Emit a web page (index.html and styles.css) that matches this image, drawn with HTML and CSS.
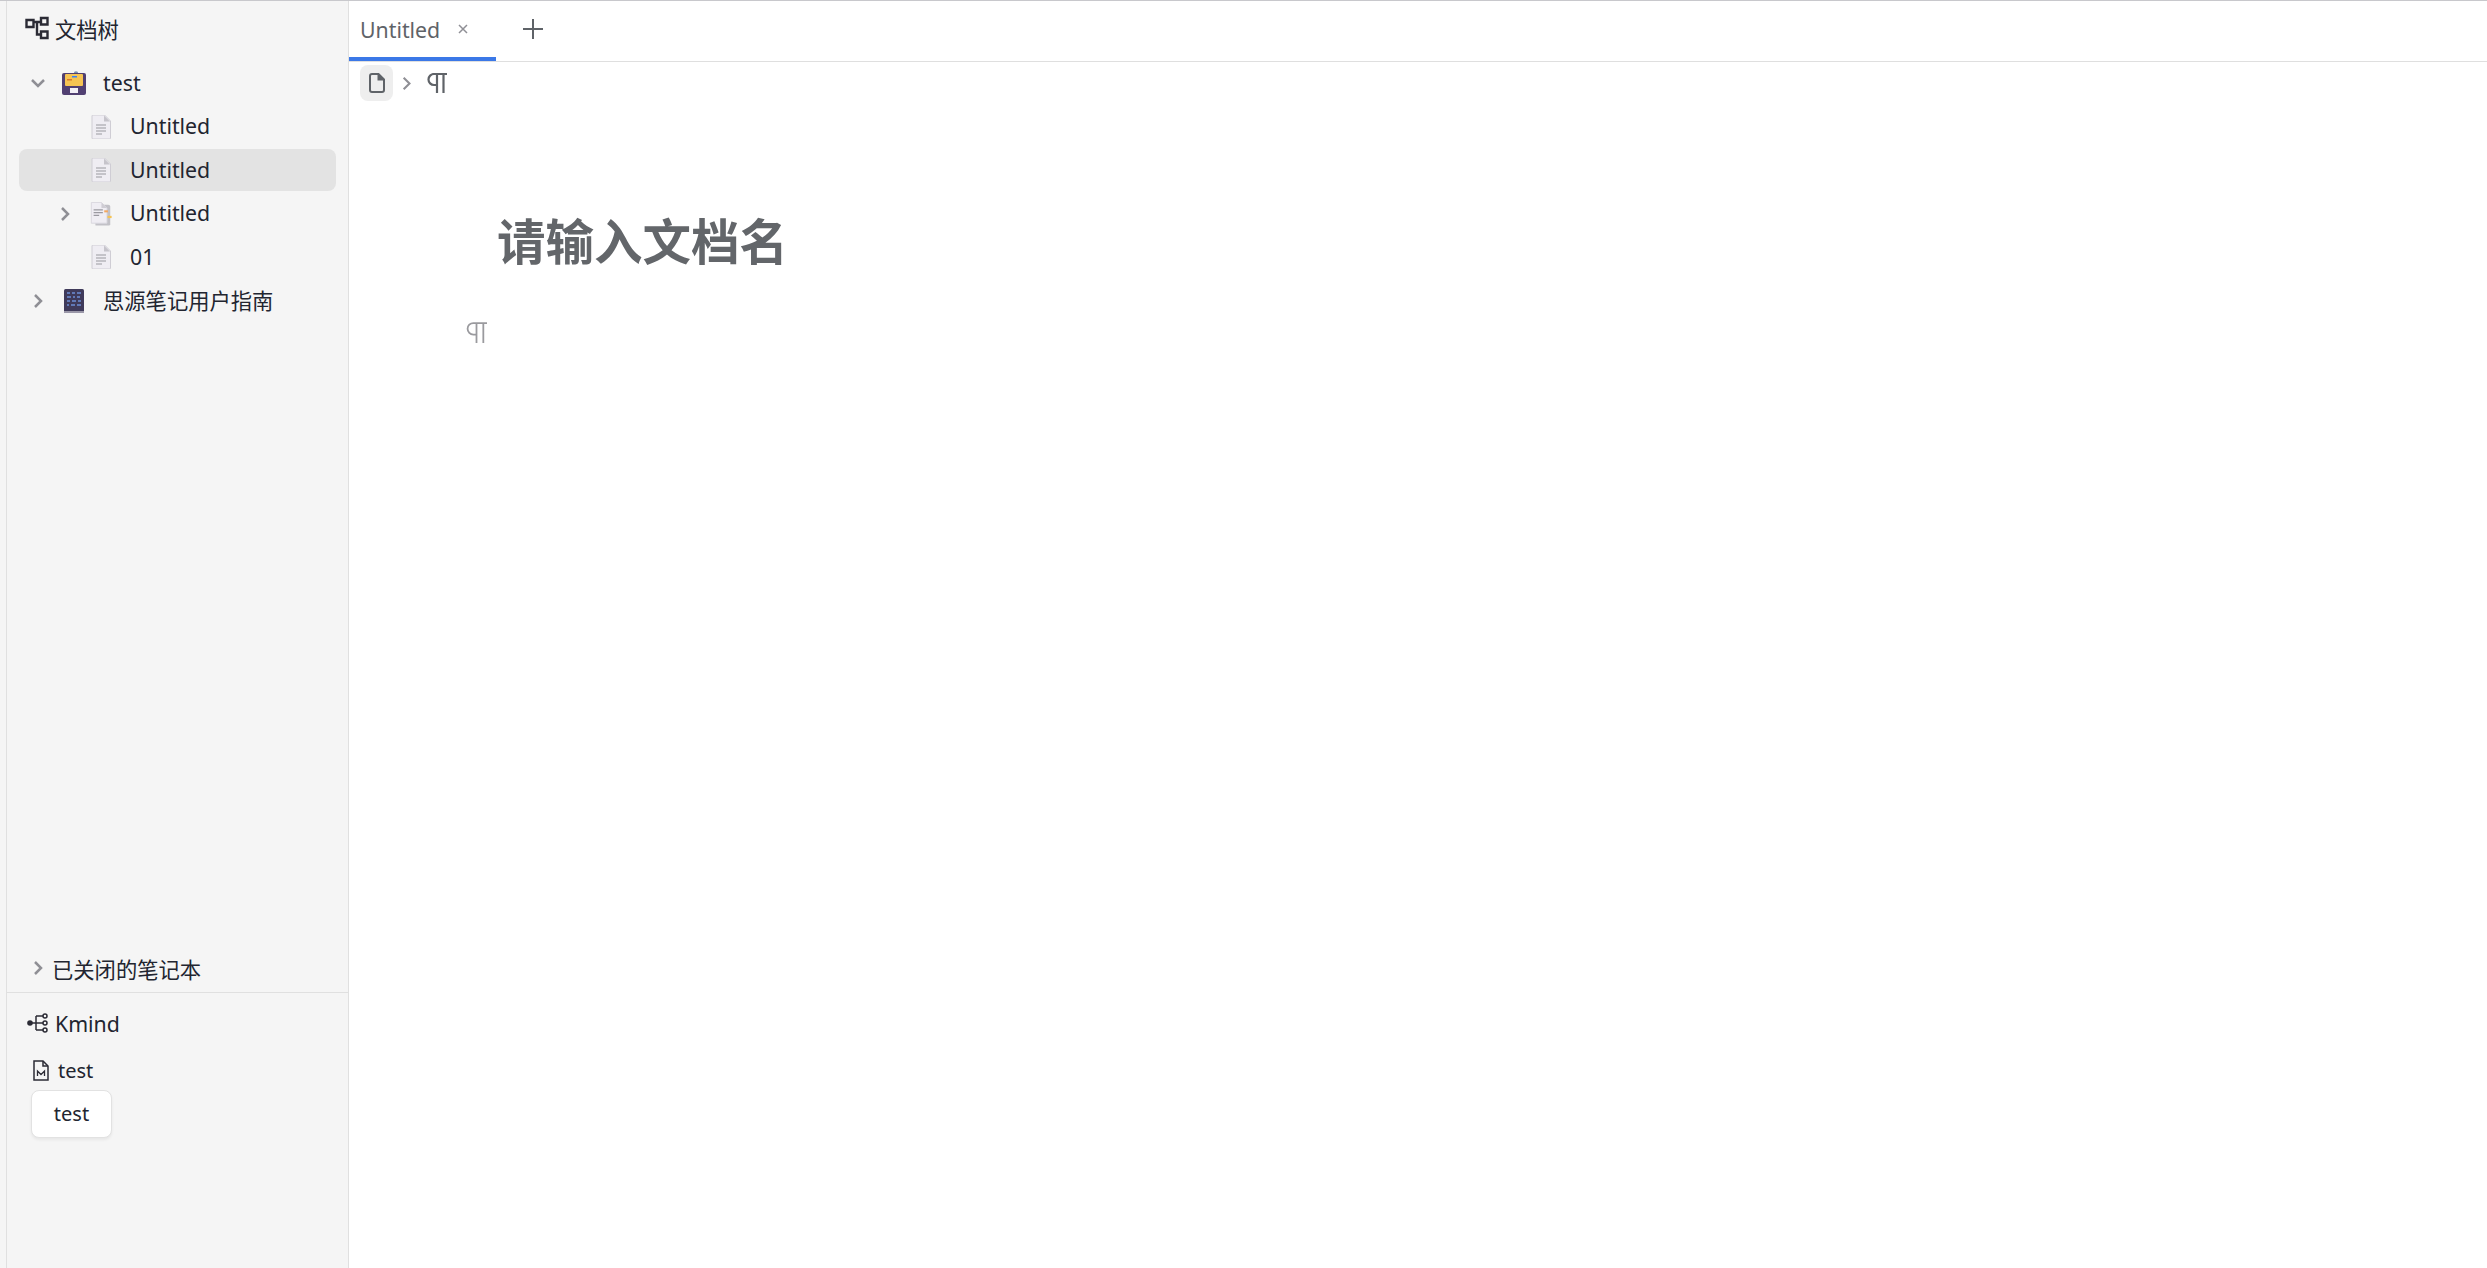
FILE: index.html
```html
<!DOCTYPE html>
<html lang="zh">
<head>
  <meta charset="UTF-8" />
  <title>Untitled</title>
  <link rel="stylesheet" href="styles.css">
</head>
<body>
  <div class="app">
    <div class="rail"></div>

    <!-- Sidebar -->
    <aside class="sidebar">
      <div class="panel-head">
        <svg class="head-icon" viewBox="0 0 24 24"><path d="M1.500 4h7v7h-7zM16 2h6.500v6.500H16zM16 15.500h6.500V22H16zM8.500 6H16M12 6v12.500h4" /></svg>
        <span>文档树</span>
      </div>

      <div class="tree">
        <div class="row level-0">
          <svg class="arrow" viewBox="0 0 16 16"><path d="M2 5l6 6 6-6" /></svg>
          <svg class="item-icon" viewBox="0 0 24 24">
            <circle cx="14" cy="2.500" r="2.200" fill="#7b8fb0" />
            <rect x="0" y="2" width="24" height="22" rx="2" fill="#514072" />
            <rect x="3" y="3" width="18" height="12" rx="1" fill="#f6c453" />
            <rect x="10" y="5" width="5" height="1.500" fill="#3b82f6" />
            <rect x="5" y="8" width="5" height="1.500" fill="#d9792b" />
            <rect x="8" y="17" width="8" height="5" fill="#f3f0f7" />
          </svg>
          <span>test</span>
        </div>
        <div class="row level-1">
          <span class="arrow"></span>
          <svg class="item-icon" viewBox="0 0 20 24"><use href="#doc-icon" /></svg>
          <span>Untitled</span>
        </div>
        <div class="row level-1 selected">
          <span class="arrow"></span>
          <svg class="item-icon" viewBox="0 0 20 24"><use href="#doc-icon" /></svg>
          <span>Untitled</span>
        </div>
        <div class="row level-1">
          <svg class="arrow" viewBox="0 0 16 16"><path d="M5 2l6 6-6 6" /></svg>
          <svg class="item-icon" viewBox="0 0 24 26">
            <path d="M5 3h15a2 2 0 0 1 2 2v19a1.500 1.500 0 0 1-1.500 1.500H6z" fill="#c2c1c7" />
            <path d="M1.500 0.500h11l6 6v16.500H1.500z" fill="#efedf3" stroke="#d8d6dd" />
            <path d="M12.500 0.500v6h6z" fill="#cfcdd4" />
            <path d="M4 8.500h10M4 11.500h10M4 14.500h6" stroke="#9a99a0" stroke-width="1.300" />
            <rect x="15.500" y="9" width="4" height="2.200" fill="#f2a65e" />
            <rect x="19" y="15" width="4.500" height="2.400" fill="#f6c453" />
          </svg>
          <span>Untitled</span>
        </div>
        <div class="row level-1">
          <span class="arrow"></span>
          <svg class="item-icon" viewBox="0 0 20 24"><use href="#doc-icon" /></svg>
          <span>01</span>
        </div>
        <div class="row level-0">
          <svg class="arrow" viewBox="0 0 16 16"><path d="M5 2l6 6-6 6" /></svg>
          <svg class="item-icon" viewBox="0 0 20 24">
            <rect x="0" y="0" width="20" height="24" rx="1.500" fill="#3f3a5a" />
            <rect x="0" y="22" width="20" height="2" fill="#9a97a8" />
            <path d="M3 4h3M8 4h3M13 4h4M3 8h4M9 8h2M13 8h3M3 12h3M8 12h4M14 12h3M3 16h2M7 16h4M13 16h4" stroke="#6d8fd6" stroke-width="1.600" />
          </svg>
          <span>思源笔记用户指南</span>
        </div>
      </div>

      <div class="closed-row">
        <svg class="arrow" viewBox="0 0 16 16"><path d="M5 2l6 6-6 6" /></svg>
        <span>已关闭的笔记本</span>
      </div>

      <div class="kmind">
        <div class="kmind-head">
          <svg class="kmind-icon" viewBox="0 0 22 20"><circle cx="3" cy="10" r="2.800" fill="#2b2b35" stroke="none" /><path d="M3 10h13M9 3v14M9 3h7M9 17h7" /><circle cx="18" cy="3" r="2" /><circle cx="18" cy="10" r="2" /><circle cx="18" cy="17" r="2" /></svg>
          <span>Kmind</span>
        </div>
        <div class="kmind-file">
          <svg class="file-icon" viewBox="0 0 16 21"><path d="M1 1h9l5 5v14H1z" /><path d="M10 1v5h5" /><path d="M4.500 16v-5l3.500 3.500 3.500-3.500v5" stroke-width="1.300" /></svg>
          <span>test</span>
        </div>
        <div class="kmind-card">test</div>
      </div>
    </aside>

    <!-- Editor -->
    <main class="editor">
      <div class="tabbar">
        <div class="tab">
          <span>Untitled</span>
          <svg class="tab-close" viewBox="0 0 10 10"><path d="M1 1l8 8M9 1l-8 8" /></svg>
        </div>
        <svg class="tab-add" viewBox="0 0 20 20"><path d="M10 0v20M0 10h20" /></svg>
      </div>

      <div class="breadcrumb">
        <span class="crumb-doc">
          <svg viewBox="0 0 16 20"><path d="M1 3a2 2 0 0 1 2-2h6.500L15 6.500V17a2 2 0 0 1-2 2H3a2 2 0 0 1-2-2z" /><path d="M9.500 1v5.500H15" fill="#5f6368" /></svg>
        </span>
        <svg class="crumb-arrow" viewBox="0 0 12 18"><path d="M2 2l7 7-7 7" /></svg>
        <svg class="crumb-mark" viewBox="0 0 20 20"><use href="#para-icon" /></svg>
      </div>

      <div class="doc-body">
        <h1 class="doc-title">请输入文档名</h1>
        <div class="block">
          <svg class="block-mark" viewBox="0 0 20 20"><use href="#para-icon" /></svg>
        </div>
      </div>
    </main>
  </div>

  <svg class="defs" width="0" height="0">
    <defs>
      <g id="doc-icon">
        <path d="M1 1a1 1 0 0 1 1-1h11.500L19.500 6v17a1 1 0 0 1-1 1H2a1 1 0 0 1-1-1z" fill="#efedf3" stroke="#cfcdd4" />
        <path d="M13 0.500v6h6z" fill="#c6c4cb" />
        <path d="M5 10h10M5 13h10M5 16h10M5 19h6" stroke="#9a99a0" stroke-width="1.200" />
      </g>
      <path id="para-icon" d="M20 1H7a5.500 5.500 0 0 0 0 11h3M10 1v19M16.500 1v19" />
    </defs>
  </svg>
</body>
</html>
```

FILE: styles.css
```css
html, body {
  margin: 0;
  height: 100%;
}

body {
  font-family: "Noto Sans", "Noto Sans CJK SC", sans-serif;
  font-size: 21.3px;
  color: #222530;
  background: #fff;
  overflow: hidden;
}

.app {
  display: flex;
  height: 100vh;
  box-sizing: border-box;
  border-top: 1px solid #c8c8cc;
}

.rail {
  width: 6px;
  background: #f5f5f5;
  border-right: 1px solid #e0e0e0;
}

/* Sidebar */
.sidebar {
  width: 342px;
  display: flex;
  flex-direction: column;
  box-sizing: border-box;
  background: #f5f5f5;
  border-right: 1px solid #e0e0e0;
}

.panel-head {
  display: flex;
  align-items: center;
  gap: 6px;
  height: 54px;
  padding-left: 18px;
}

.head-icon {
  width: 24px;
  height: 24px;
  fill: none;
  stroke: #2b2b35;
  stroke-width: 2.400;
}

.tree {
  flex: 1;
  padding: 7px 12px 0;
}

.row {
  display: flex;
  align-items: center;
  height: 42px;
  margin-bottom: 1.500px;
  border-radius: 8px;
}

.row span:last-child {
  position: relative;
  top: -1px;
}

.row.selected {
  background: #e3e3e3;
}

.level-0 {
  padding-left: 11px;
}

.level-1 {
  padding-left: 38px;
}

.arrow {
  width: 16px;
  height: 16px;
  flex: none;
  fill: none;
  stroke: #8f8f95;
  stroke-width: 2.500;
}

.item-icon {
  width: 24px;
  height: 24px;
  flex: none;
  margin: 0 17px 0 16px;
}

.closed-row {
  display: flex;
  align-items: center;
  gap: 6px;
  height: 38px;
  margin-bottom: 5px;
  padding-left: 23px;
}

.kmind {
  height: 275px;
  border-top: 1px solid #e0e0e0;
}

.kmind-head {
  display: flex;
  align-items: center;
  gap: 6px;
  height: 60px;
  padding-left: 20px;
}

.kmind-icon {
  width: 22px;
  height: 20px;
  fill: none;
  stroke: #2b2b35;
  stroke-width: 1.500;
}

.kmind-file {
  display: flex;
  align-items: center;
  gap: 9px;
  height: 34px;
  padding-left: 26px;
  font-size: 20px;
}

.file-icon {
  width: 16px;
  height: 21px;
  fill: none;
  stroke: #2b2b35;
  stroke-width: 1.500;
}

.kmind-card {
  width: 81px;
  height: 48px;
  margin: 3px 0 0 24px;
  box-sizing: border-box;
  border: 1px solid #e2e2e2;
  border-radius: 8px;
  background: #fff;
  box-shadow: 0 2px 3px rgba(0, 0, 0, 0.06);
  font-size: 20px;
  line-height: 45px;
  text-align: center;
}

/* Editor */
.editor {
  flex: 1;
  min-width: 0;
}

.tabbar {
  display: flex;
  align-items: center;
  height: 60px;
  border-bottom: 1px solid #dfdfdf;
  color: #5f6368;
}

.tab {
  display: flex;
  align-items: center;
  gap: 18px;
  width: 147px;
  height: 60px;
  box-sizing: border-box;
  padding-left: 11px;
  border-bottom: 4px solid #3b78e7;
}

.tab-close {
  width: 10px;
  height: 10px;
  fill: none;
  stroke: #8f8f95;
  stroke-width: 1.500;
}

.tab-add {
  width: 20px;
  height: 20px;
  margin: 0 0 5px 27px;
  fill: none;
  stroke: #5f6368;
  stroke-width: 2;
}

.breadcrumb {
  display: flex;
  align-items: center;
  height: 42px;
  padding-left: 11px;
}

.crumb-doc {
  display: flex;
  align-items: center;
  justify-content: center;
  width: 33px;
  height: 36px;
  border-radius: 8px;
  background: #eeeeee;
}

.crumb-doc svg {
  width: 16px;
  height: 20px;
  fill: none;
  stroke: #5f6368;
  stroke-width: 2;
}

.crumb-arrow {
  width: 10px;
  height: 15px;
  margin: 0 15px 0 9px;
  fill: none;
  stroke: #8f8f95;
  stroke-width: 2.500;
}

.crumb-mark {
  width: 20px;
  height: 20px;
  fill: none;
  stroke: #5f6368;
  stroke-width: 2.200;
}

.doc-body {
  padding-left: 116px;
}

.doc-title {
  margin: 0;
  padding: 98px 0 0 32px;
  font-family: "Noto Sans CJK SC", sans-serif;
  font-size: 48.500px;
  line-height: 74px;
  font-weight: 700;
  color: #63666a;
}

.block {
  display: flex;
  align-items: center;
  height: 40px;
  margin-top: 36px;
}

.block-mark {
  width: 21px;
  height: 21px;
  margin-left: 1px;
  fill: none;
  stroke: #9a9a9e;
  stroke-width: 1.700;
}

.defs {
  position: absolute;
}
```
